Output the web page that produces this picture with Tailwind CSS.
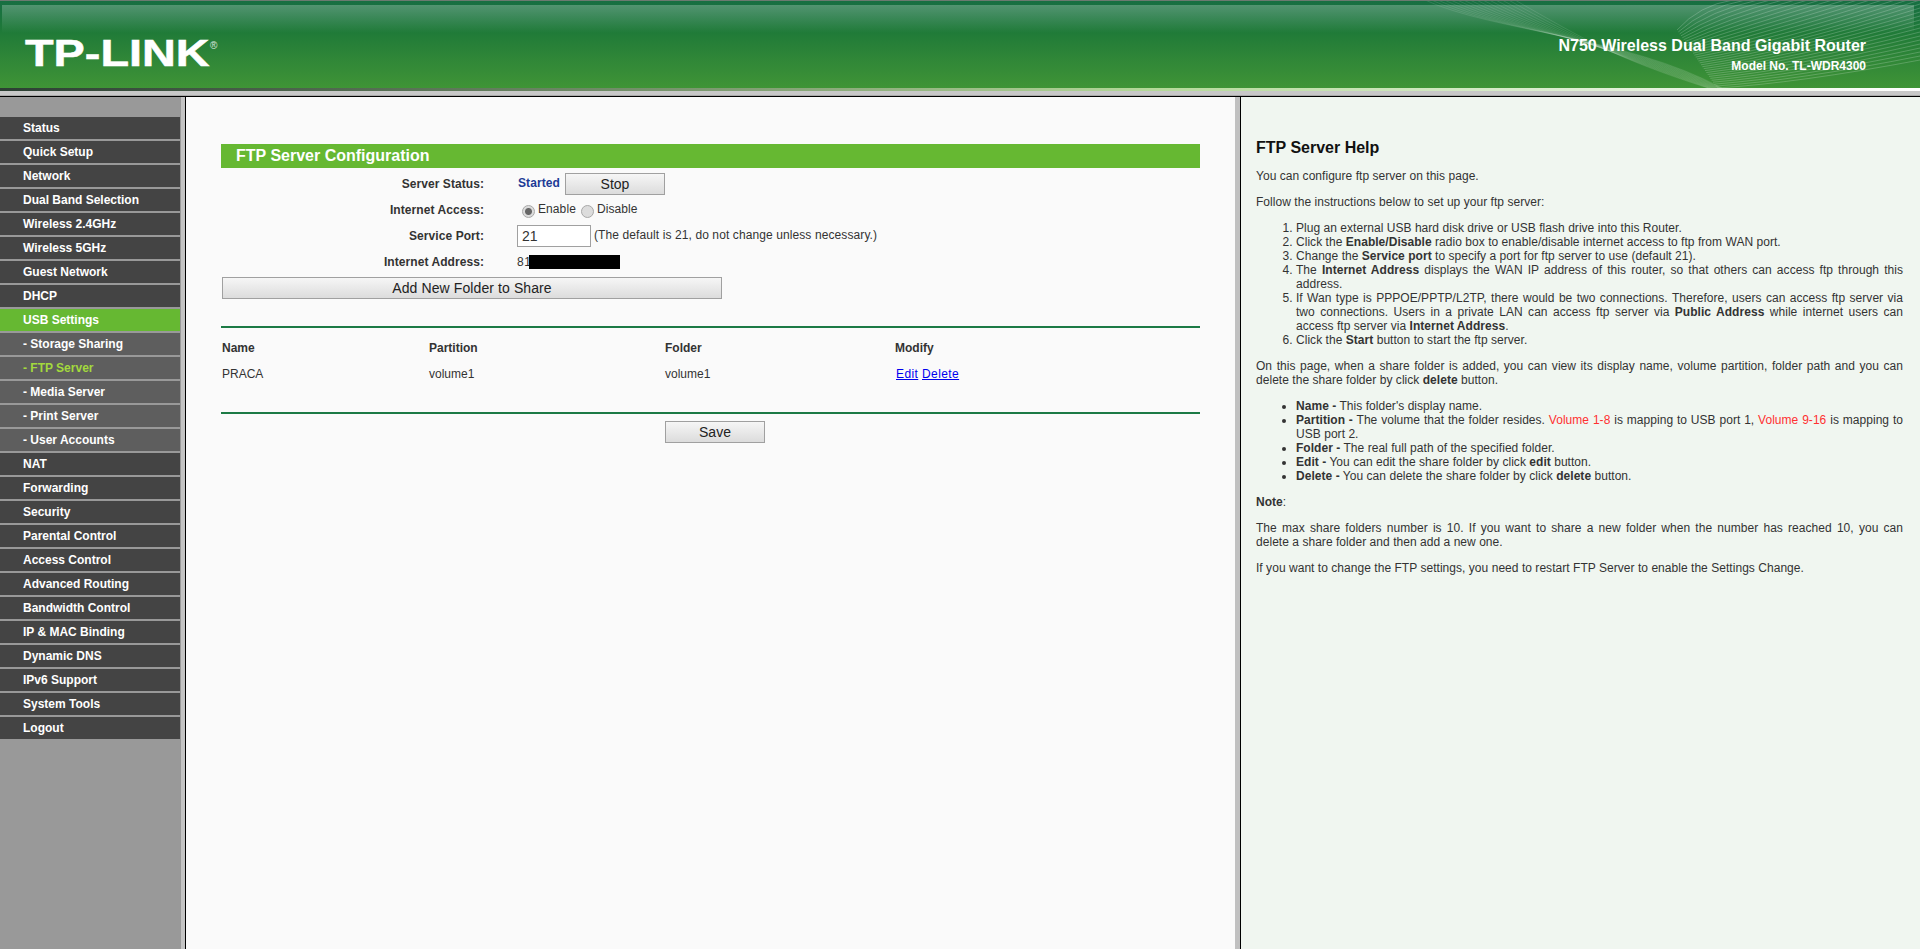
<!DOCTYPE html>
<html lang="en">
  <head>
    <meta charset="UTF-8" />
    <meta name="viewport" content="width=device-width, initial-scale=1.0" />
    <title>TL-WDR4300</title>
    <script src="https://cdn.jsdelivr.net/npm/@tailwindcss/browser@4"></script>
  </head>
  <body class="h-[949px] overflow-hidden bg-[#c8c8c8] font-['Liberation_Sans',Arial,sans-serif] text-[12px] leading-[14px] text-[#333]">
    <!-- Header -->
    <header class="relative h-[88px] overflow-hidden border-t border-[#6b7a70] bg-gradient-to-b from-[#176f42] via-[#1f7a38] via-35% to-[#3f9436]">
      <div class="absolute left-[2px] right-[6px] top-[4px] h-[28px] bg-gradient-to-b from-white/25 to-white/0"></div>
      <svg id="waves" class="absolute left-0 top-[-1px]" width="1920" height="88" viewBox="0 0 1920 88" fill="none" stroke="white" stroke-width="0.8"></svg>
      <div class="relative flex h-full items-start justify-between pl-[25px] pr-[54px]">
        <div class="relative mt-[33px] origin-left scale-x-[1.3] text-[36px] font-bold leading-[40px] text-white [-webkit-text-stroke:0.5px_white]">TP-LINK</div>
        <div class="mt-[36px] flex flex-col items-end font-bold text-white">
          <div class="text-[16px] leading-[18px]">N750 Wireless Dual Band Gigabit Router</div>
          <div class="mt-[4px] text-[12px] leading-[14px]">Model No. TL-WDR4300</div>
        </div>
      </div>
      <span class="absolute left-[210px] top-[39px] text-[10px] leading-[12px] text-white/80">®</span>
    </header>
    <div class="h-[3px] bg-gradient-to-r from-[#2c3f33] via-[#b5d99a] via-60% to-white"></div>
    <div class="h-[5px] border-b border-[#a9a9a9] bg-[#c8c8c8]"></div>
    <div class="h-px bg-black"></div>

    <div class="flex h-[852px]">
      <!-- Left menu -->
      <nav class="flex w-[181px] shrink-0 flex-col gap-[2px] bg-[#999999] pr-px pt-[20px] font-bold text-white">
        <a class="flex h-[22px] items-center bg-[#444444] pl-[23px]">Status</a>
        <a class="flex h-[22px] items-center bg-[#444444] pl-[23px]">Quick Setup</a>
        <a class="flex h-[22px] items-center bg-[#444444] pl-[23px]">Network</a>
        <a class="flex h-[22px] items-center bg-[#444444] pl-[23px]">Dual Band Selection</a>
        <a class="flex h-[22px] items-center bg-[#444444] pl-[23px]">Wireless 2.4GHz</a>
        <a class="flex h-[22px] items-center bg-[#444444] pl-[23px]">Wireless 5GHz</a>
        <a class="flex h-[22px] items-center bg-[#444444] pl-[23px]">Guest Network</a>
        <a class="flex h-[22px] items-center bg-[#444444] pl-[23px]">DHCP</a>
        <a class="flex h-[22px] items-center bg-[#66b832] pl-[23px]">USB Settings</a>
        <a class="flex h-[22px] items-center bg-[#5e5e5e] pl-[23px]">- Storage Sharing</a>
        <a class="flex h-[22px] items-center bg-[#5e5e5e] pl-[23px] text-[#a3d93d]">- FTP Server</a>
        <a class="flex h-[22px] items-center bg-[#5e5e5e] pl-[23px]">- Media Server</a>
        <a class="flex h-[22px] items-center bg-[#5e5e5e] pl-[23px]">- Print Server</a>
        <a class="flex h-[22px] items-center bg-[#5e5e5e] pl-[23px]">- User Accounts</a>
        <a class="flex h-[22px] items-center bg-[#444444] pl-[23px]">NAT</a>
        <a class="flex h-[22px] items-center bg-[#444444] pl-[23px]">Forwarding</a>
        <a class="flex h-[22px] items-center bg-[#444444] pl-[23px]">Security</a>
        <a class="flex h-[22px] items-center bg-[#444444] pl-[23px]">Parental Control</a>
        <a class="flex h-[22px] items-center bg-[#444444] pl-[23px]">Access Control</a>
        <a class="flex h-[22px] items-center bg-[#444444] pl-[23px]">Advanced Routing</a>
        <a class="flex h-[22px] items-center bg-[#444444] pl-[23px]">Bandwidth Control</a>
        <a class="flex h-[22px] items-center bg-[#444444] pl-[23px]">IP &amp; MAC Binding</a>
        <a class="flex h-[22px] items-center bg-[#444444] pl-[23px]">Dynamic DNS</a>
        <a class="flex h-[22px] items-center bg-[#444444] pl-[23px]">IPv6 Support</a>
        <a class="flex h-[22px] items-center bg-[#444444] pl-[23px]">System Tools</a>
        <a class="flex h-[22px] items-center bg-[#444444] pl-[23px]">Logout</a>
      </nav>
      <div class="w-[4px] shrink-0 bg-[#c4c4c4]"></div>
      <div class="w-px shrink-0 bg-black"></div>

      <!-- Main frame -->
      <main class="w-[1049px] shrink-0 bg-[#fafafa] pl-[35px] pt-[47px]">
        <div class="w-[979px]">
          <h1 class="flex h-[24px] items-center bg-[#66b832] pl-[15px] text-[16px] font-bold text-white">FTP Server Configuration</h1>
          <div class="mt-[3px] grid grid-cols-[263px_1fr] auto-rows-[26px] items-center gap-x-[33px]">
            <div class="text-right font-bold tracking-[0.07px]">Server Status:</div>
            <div class="flex items-center">
              <span class="relative top-[-1px] ml-px w-[47px] font-bold tracking-[0.1px] text-[#1c3b96]">Started</span>
              <button class="h-[22px] w-[100px] border border-[#a0a0a0] bg-gradient-to-b from-[#f6f6f6] to-[#dcdcdc] text-[14px] text-[#222]">Stop</button>
            </div>
            <div class="text-right font-bold tracking-[0.07px]">Internet Access:</div>
            <div class="flex items-center tracking-[0.09px]">
              <input type="radio" checked class="ml-[5px] mt-[3px] h-[13px] w-[13px] appearance-none rounded-full border border-[#a8a8a8] bg-[radial-gradient(circle,#666_3px,#dcdcdc_4px)]" />
              <span class="ml-[3px] mt-[-2px]">Enable</span>
              <input type="radio" class="ml-[5px] mt-[3px] h-[13px] w-[13px] appearance-none rounded-full border border-[#a8a8a8] bg-[#dcdcdc]" />
              <span class="ml-[3px] mt-[-2px]">Disable</span>
            </div>
            <div class="text-right font-bold tracking-[0.07px]">Service Port:</div>
            <div class="flex items-center">
              <input type="text" value="21" class="h-[22px] w-[74px] border border-[#a0a0a0] bg-white pl-[4px] text-[14px] text-[#333]" />
              <span class="ml-[3px] mt-[-2px] tracking-[0.1px]">(The default is 21, do not change unless necessary.)</span>
            </div>
            <div class="text-right font-bold tracking-[0.07px]">Internet Address:</div>
            <div class="flex items-center tracking-[0.5px]">81<span class="ml-[-2px] h-[14px] w-[91px] bg-black"></span></div>
          </div>
          <button class="ml-px mt-[2px] block h-[22px] w-[500px] border border-[#a0a0a0] bg-gradient-to-b from-[#f6f6f6] to-[#dcdcdc] text-[14px] tracking-[0.1px] text-[#222]">Add New Folder to Share</button>

          <div class="mt-[27px] h-[2px] bg-[#1c7a45]"></div>
          <div class="grid grid-cols-[207px_236px_230px_1fr] pl-px">
            <div class="mt-[13px] font-bold">Name</div>
            <div class="mt-[13px] font-bold">Partition</div>
            <div class="mt-[13px] font-bold">Folder</div>
            <div class="mt-[13px] font-bold">Modify</div>
            <div class="mt-[12px]">PRACA</div>
            <div class="mt-[12px]">volume1</div>
            <div class="mt-[12px]">volume1</div>
            <div class="mt-[12px] pl-px tracking-[0.4px]"><a class="text-[#0000ee] underline">Edit</a>&nbsp;<a class="text-[#0000ee] underline">Delete</a></div>
          </div>
          <div class="mt-[31px] h-[2px] bg-[#1c7a45]"></div>
          <button class="ml-[444px] mt-[7px] block h-[22px] w-[100px] border border-[#a0a0a0] bg-gradient-to-b from-[#f6f6f6] to-[#dcdcdc] text-[14px] text-[#222]">Save</button>
        </div>
      </main>
      <div class="w-[5px] shrink-0 bg-[#c0c0c0]"></div>
      <div class="w-px shrink-0 bg-black"></div>

      <!-- Help frame -->
      <aside class="flex-1 bg-[#f0f6f0] pl-[15px] pr-[17px] pt-[42px] text-justify tracking-[0.04px]">
        <h2 class="text-[16px] font-bold leading-[18px] tracking-normal text-[#111]">FTP Server Help</h2>
        <p class="mt-[12px]">You can configure ftp server on this page.</p>
        <p class="mt-[12px]">Follow the instructions below to set up your ftp server:</p>
        <ol class="mt-[12px] list-decimal pl-[40px]">
          <li>Plug an external USB hard disk drive or USB flash drive into this Router.</li>
          <li>Click the <b>Enable/Disable</b> radio box to enable/disable internet access to ftp from WAN port.</li>
          <li>Change the <b>Service port</b> to specify a port for ftp server to use (default 21).</li>
          <li>The <b>Internet Address</b> displays the WAN IP address of this router, so that others can access ftp through this address.</li>
          <li>If Wan type is PPPOE/PPTP/L2TP, there would be two connections. Therefore, users can access ftp server via two connections. Users in a private LAN can access ftp server via <b>Public Address</b> while internet users can access ftp server via <b>Internet Address</b>.</li>
          <li>Click the <b>Start</b> button to start the ftp server.</li>
        </ol>
        <p class="mt-[12px]">On this page, when a share folder is added, you can view its display name, volume partition, folder path and you can delete the share folder by click <b>delete</b> button.</p>
        <ul class="mt-[12px] list-disc pl-[40px]">
          <li><b>Name -</b> This folder's display name.</li>
          <li><b>Partition -</b> The volume that the folder resides. <span class="text-[#ff3030]">Volume 1-8</span> is mapping to USB port 1, <span class="text-[#ff3030]">Volume 9-16</span> is mapping to USB port 2.</li>
          <li><b>Folder -</b> The real full path of the specified folder.</li>
          <li><b>Edit -</b> You can edit the share folder by click <b>edit</b> button.</li>
          <li><b>Delete -</b> You can delete the share folder by click <b>delete</b> button.</li>
        </ul>
        <p class="mt-[12px]"><b>Note</b>:</p>
        <p class="mt-[12px]">The max share folders number is 10. If you want to share a new folder when the number has reached 10, you can delete&nbsp;a share folder and then add a new one.</p>
        <p class="mt-[12px]">If you want to change the FTP settings, you need to restart FTP Server to enable the Settings Change.</p>
      </aside>
    </div>

    <script>
      // Decorative line fans in the header
      const waves = document.getElementById("waves");
      let a = "";
      for (let i = 0; i <= 14; i++) {
        const t = i / 14;
        const sx = 1425 + 90 * t;
        const ex = 1722 - 14 * t;
        a += `M${sx} 0C${sx + 70} ${32 + 8 * t} ${1625 - 10 * t} ${36 + 22 * t} ${ex} 88`;
      }
      let b = "";
      for (let i = 0; i <= 30; i++) {
        const t = i / 30;
        const sx = 1677 + 40 * t;
        const sy = 30 + 58 * t;
        const ex = t < 0.5 ? 1733 + 374 * t : 1920;
        const ey = t < 0.5 ? 0 : 120 * (t - 0.5);
        b += `M${sx} ${sy}Q${sx + (ex - sx) * 0.4} ${sy - 5 - 20 * (1 - t)} ${ex} ${ey}`;
      }
      waves.innerHTML = `<path stroke-opacity="0.14" d="${a}" /><path stroke-opacity="0.26" d="${b}" />`;
    </script>
  </body>
</html>
